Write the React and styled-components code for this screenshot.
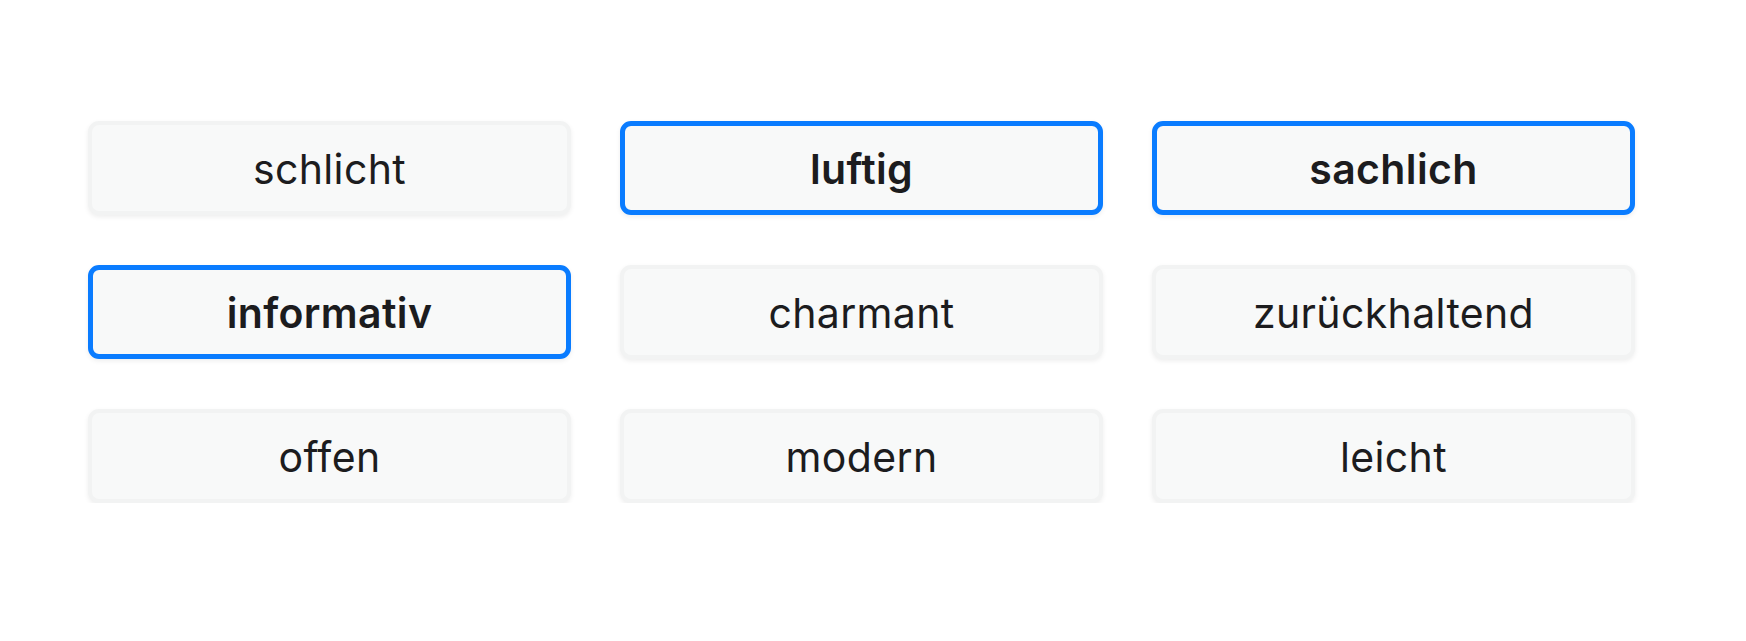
import React, { useState } from 'react'
import styled, { createGlobalStyle } from 'styled-components'

const GlobalStyle = createGlobalStyle`
  body {
    margin: 0;
    background: #ffffff;
    font-family: Inter, "Noto Sans", sans-serif;
  }
`

const Page = styled.div`
  padding: 121px 0 0 88px;
`

const Grid = styled.div`
  display: grid;
  grid-template-columns: repeat(3, 483px);
  column-gap: 49px;
  row-gap: 50px;
`

const Option = styled.button`
  box-sizing: border-box;
  height: 94px;
  display: flex;
  align-items: center;
  justify-content: center;
  background: #f8f9f9;
  border: ${p => (p.$active ? '5px solid #0a7cff' : '4px solid #f2f3f3')};
  border-radius: 11px;
  box-shadow: 0 2px 5px rgba(0, 0, 0, 0.07);
  font-family: Inter, "Noto Sans", sans-serif;
  font-size: 41px;
  font-weight: ${p => (p.$active ? 600 : 440)};
  letter-spacing: 0.35px;
  color: #1c1c1e;
  cursor: pointer;
  padding: 2px 0 0;
`

const words = [
  'schlicht', 'luftig', 'sachlich',
  'informativ', 'charmant', 'zurückhaltend',
  'offen', 'modern', 'leicht',
]

export default function App() {
  const [picked, setPicked] = useState(['luftig', 'sachlich', 'informativ'])

  const toggle = w =>
    setPicked(prev => (prev.includes(w) ? prev.filter(x => x !== w) : [...prev, w]))

  return (
    <>
      <GlobalStyle />
      <Page>
        <Grid>
          {words.map(w => (
            <Option key={w} $active={picked.includes(w)} onClick={() => toggle(w)}>
              {w}
            </Option>
          ))}
        </Grid>
      </Page>
    </>
  )
}
